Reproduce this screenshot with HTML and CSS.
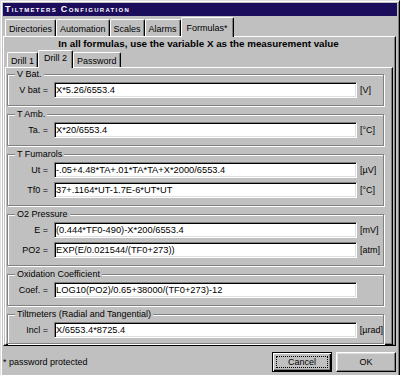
FILE: index.html
```html
<!DOCTYPE html>
<html lang="en">
<head>
    <meta charset="UTF-8">
    <title>Tiltmeters Configuration</title>
    <link rel="stylesheet" href="styles.css">
</head>
<body>
    <div class="window">
        <div class="titlebar">Tiltmeters Configuration</div>

        <div class="tabs outer-tabs">
            <div class="tab">Directories</div>
            <div class="tab">Automation</div>
            <div class="tab">Scales</div>
            <div class="tab">Alarms</div>
            <div class="tab active">Formulas*</div>
        </div>

        <div class="panel outer-panel">
            <p class="hint">In all formulas, use the variable X as the measurement value</p>

            <div class="tabs inner-tabs">
                <div class="tab">Drill 1</div>
                <div class="tab active">Drill 2</div>
                <div class="tab">Password</div>
            </div>

            <div class="panel inner-panel">
                <fieldset class="group">
                    <legend>V Bat.</legend>
                    <div class="row"><label>V bat =</label><div class="field">X*5.26/6553.4</div><span class="unit">[V]</span></div>
                </fieldset>

                <fieldset class="group">
                    <legend>T Amb.</legend>
                    <div class="row"><label>Ta. =</label><div class="field">X*20/6553.4</div><span class="unit">[°C]</span></div>
                </fieldset>

                <fieldset class="group">
                    <legend>T Fumarols</legend>
                    <div class="row"><label>Ut =</label><div class="field">-.05+4.48*TA+.01*TA*TA+X*2000/6553.4</div><span class="unit">[µV]</span></div>
                    <div class="row"><label>Tf0 =</label><div class="field">37+.1164*UT-1.7E-6*UT*UT</div><span class="unit">[°C]</span></div>
                </fieldset>

                <fieldset class="group">
                    <legend>O2 Pressure</legend>
                    <div class="row"><label>E =</label><div class="field">(0.444*TF0-490)-X*200/6553.4</div><span class="unit">[mV]</span></div>
                    <div class="row"><label>PO2 =</label><div class="field">EXP(E/0.021544/(TF0+273))</div><span class="unit">[atm]</span></div>
                </fieldset>

                <fieldset class="group">
                    <legend>Oxidation Coefficient</legend>
                    <div class="row"><label>Coef. =</label><div class="field">LOG10(PO2)/0.65+38000/(TF0+273)-12</div></div>
                </fieldset>

                <fieldset class="group">
                    <legend>Tiltmeters (Radial and Tangential)</legend>
                    <div class="row"><label>Incl =</label><div class="field">X/6553.4*8725.4</div><span class="unit">[µrad]</span></div>
                </fieldset>
            </div>
        </div>

        <div class="footer">
            <span class="note">* password protected</span>
            <div class="buttons">
                <button class="btn default">Cancel</button>
                <button class="btn">OK</button>
            </div>
        </div>
    </div>
</body>
</html>
```

FILE: styles.css
```css
body {
    margin: 0;
    background: #c0c0c0;
    font-family: "Liberation Sans", Arial, sans-serif;
    font-size: 9px;
    color: #000;
    overflow: hidden;
}
.window {
    width: 400px;
    height: 380px;
    box-sizing: border-box;
    padding: 2px 2px 0 2px;
    border: 1px solid;
    border-color: #dfdfdf #000 #000 #dfdfdf;
    box-shadow: inset 1px 1px #fff, inset -1px -1px #808080;
}
.titlebar {
    height: 13px;
    margin-bottom: 1px;
    padding-left: 2px;
    background: #1b0c5c;
    color: #fff;
    font-size: 9px;
    font-weight: bold;
    font-variant: small-caps;
    letter-spacing: 1.3px;
    line-height: 13px;
}

/* tab strips */
.tabs {
    display: flex;
    align-items: flex-end;
}
.outer-tabs { padding-left: 2px; }
.inner-tabs { padding-left: 3px; }
.tab {
    box-sizing: border-box;
    padding: 0 3px;
    border: 1px solid;
    border-bottom: 0;
    border-color: #fff #000 #000 #fff;
    border-radius: 2px 2px 0 0;
    box-shadow: inset -1px 0 #808080;
    white-space: nowrap;
    line-height: 14px;
}
.tab.active {
    position: relative;
    z-index: 1;
    margin-bottom: -1px;
    background: #c0c0c0;
}
.outer-tabs .tab { height: 17px; padding-top: 2px; }
.outer-tabs .tab.active { height: 20px; padding: 3px 5px 0; }
.inner-tabs .tab { height: 15px; padding-top: 1px; }
.inner-tabs .tab.active { height: 18px; padding: 0 5px; }

.panel {
    border: 1px solid;
    border-color: #fff #000 #000 #fff;
    box-shadow: inset -1px -1px #808080;
}
.outer-panel {
    margin-right: 1px;
    padding: 0 2px 0 0;
}
.hint {
    margin: 0;
    padding-top: 1px;
    line-height: 12px;
    text-align: center;
    font-size: 9.8px;
    font-weight: bold;
}
.inner-panel {
    margin-left: 1px;
    padding: 1px 8px 0 1px;
}

/* group boxes */
.group {
    margin: 0;
    padding: 2px 0 7px;
    min-width: 0;
    border: 1px solid #808080;
    box-shadow: inset 1px 1px #fff, 1px 1px #fff;
}
.group + .group { margin-top: 3px; }
.group:last-child { padding-bottom: 5px; }
.group legend {
    margin-left: 7px;
    padding: 0 2px;
    line-height: 11px;
    background: #c0c0c0;
}
.row {
    display: flex;
    align-items: center;
    height: 16px;
}
.row + .row { margin-top: 4px; }
.row label {
    width: 40px;
    margin-right: 6px;
    text-align: right;
    white-space: nowrap;
}
.field {
    box-sizing: border-box;
    width: 303px;
    height: 16px;
    padding: 1px 1px 0;
    background: #fff;
    border: 1px solid;
    border-color: #808080 #fff #fff #808080;
    box-shadow: inset 1px 1px #000, inset -1px -1px #dfdfdf;
    line-height: 13px;
    font-size: 9.3px;
    white-space: nowrap;
    overflow: hidden;
}
.unit {
    margin-left: 3px;
    white-space: nowrap;
}

/* bottom bar */
.footer {
    display: flex;
    align-items: center;
    justify-content: space-between;
    margin-top: 6px;
    padding-right: 1px;
}
.buttons {
    display: flex;
    gap: 4px;
}
.btn {
    width: 60px;
    height: 20px;
    padding: 0;
    font: inherit;
    color: #000;
    background: #c0c0c0;
    border: 1px solid;
    border-color: #fff #000 #000 #fff;
    box-shadow: inset -1px -1px #808080, inset 1px 1px #dfdfdf;
}
.btn.default {
    border-color: #000;
    box-shadow: inset 1px 1px #fff, inset -1px -1px #000, inset -2px -2px #808080;
    outline: 1px dotted #000;
    outline-offset: -5px;
}
```
